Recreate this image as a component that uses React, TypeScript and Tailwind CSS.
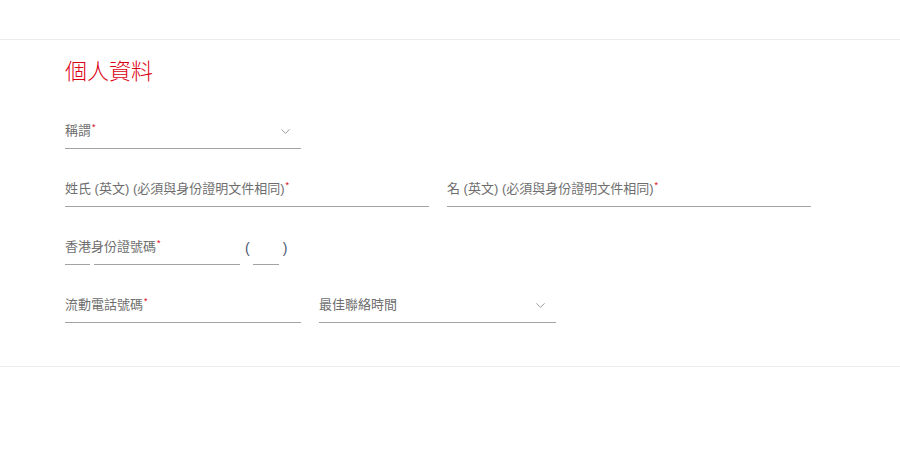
import { ChevronDown } from 'lucide-react';

const FONT = { fontFamily: '"Liberation Sans", "Noto Sans CJK TC", sans-serif' };

function Req() {
  return <span className="relative -top-[5px] ml-px text-[9px] text-[#db0011]">*</span>;
}

function Field({ label, required, width, select }: { label: string; required?: boolean; width: string; select?: boolean }) {
  return (
    <div className={`flex h-[38px] items-center justify-between border-b border-[#a3a3a3] ${width}`}>
      <span className="pt-[2px] text-[13px] text-[#6e6e6e]">
        {label}
        {required && <Req />}
      </span>
      {select && <ChevronDown className="mr-[8px] mt-[4px] h-[15px] w-[15px] text-[#7a7a7a]" strokeWidth={1.2} />}
    </div>
  );
}

export default function App() {
  return (
    <div className="min-h-[452px] bg-white" style={FONT}>
      <div className="h-[40px] border-b border-[#ececec]" />
      <div className="border-b border-[#ececec] pb-[43px] pl-[65px]">
        <h2 className="pt-[17px] text-[22px] font-light leading-[30px] text-[#db0011]">個人資料</h2>
        <div className="mt-[24px] flex flex-col gap-[20px]">
          <Field label="稱謂" required select width="w-[236px]" />
          <div className="flex gap-[18px]">
            <Field label="姓氏 (英文) (必須與身份證明文件相同)" required width="w-[364px]" />
            <Field label="名 (英文) (必須與身份證明文件相同)" required width="w-[364px]" />
          </div>
          <div className="relative flex h-[38px] items-end">
            <span className="absolute left-0 top-[10px] text-[13px] text-[#6e6e6e]">
              香港身份證號碼
              <Req />
            </span>
            <div className="h-0 w-[25px] border-b border-[#a3a3a3]" />
            <div className="ml-[4px] h-0 w-[146px] border-b border-[#a3a3a3]" />
            <span className="mb-[6px] ml-[5px] text-[14px] text-[#4a5570]">(</span>
            <div className="ml-[3px] h-0 w-[26px] border-b border-[#a3a3a3]" />
            <span className="mb-[6px] ml-[4px] text-[14px] text-[#4a5570]">)</span>
          </div>
          <div className="flex gap-[18px]">
            <Field label="流動電話號碼" required width="w-[236px]" />
            <Field label="最佳聯絡時間" select width="w-[237px]" />
          </div>
        </div>
      </div>
    </div>
  );
}
